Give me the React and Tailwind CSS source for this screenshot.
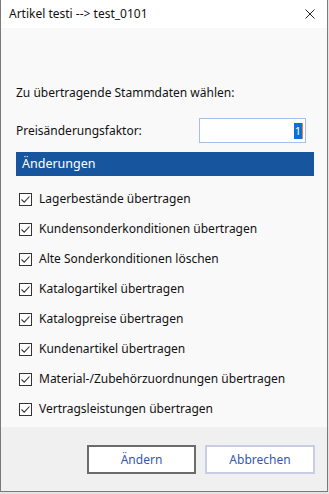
import React from "react"

const items = [
  "Lagerbestände übertragen",
  "Kundensonderkonditionen übertragen",
  "Alte Sonderkonditionen löschen",
  "Katalogartikel übertragen",
  "Katalogpreise übertragen",
  "Kundenartikel übertragen",
  "Material-/Zubehörzuordnungen übertragen",
  "Vertragsleistungen übertragen",
]

const Check = ({ label }) => (
  <div className="flex items-center h-[30px]">
    <div className="w-[13px] h-[13px] border border-[#333] bg-white flex items-center justify-center ml-[3px]">
      <svg width="11" height="11" viewBox="0 0 11 11">
        <path d="M1.5 5.5 L4.2 8.2 L9.5 2.5" fill="none" stroke="#333" strokeWidth="1.1" />
      </svg>
    </div>
    <span className="ml-[7px] text-[12px] text-[#111]">{label}</span>
  </div>
)

export default function App() {
  return (
    <div className="w-[329px] h-[494px] bg-[#e4e4e4] flex" style={{ fontFamily: '"Noto Sans", sans-serif' }}>
      <div className="w-[328px] h-[492px] border border-t-0 border-[#7a7a7a] flex flex-col bg-[#f9f9f9]">
        {/* Title bar */}
        <div className="h-[28px] bg-white flex items-center justify-between pl-[8px] pr-[12px]">
          <span className="text-[12px] text-[#111]">Artikel testi --&gt; test_0101</span>
          <svg width="10" height="10" viewBox="0 0 10 10">
            <path d="M0.5 0.5 L9.5 9.5 M9.5 0.5 L0.5 9.5" stroke="#222" strokeWidth="1" />
          </svg>
        </div>

        {/* Body */}
        <div className="flex-1 flex flex-col pl-[15px] pr-[13px]">
          <div className="mt-[55px] h-[20px] flex items-center text-[12px] text-[#111]">
            Zu übertragende Stammdaten wählen:
          </div>
          <div className="mt-[15px] flex items-center justify-between">
            <span className="text-[12px] text-[#111]">Preisänderungsfaktor:</span>
            <div className="w-[107px] h-[25px] border border-[#a6c1e8] bg-white flex items-center justify-end pr-[2px] mr-[8px]">
              <span className="bg-[#0a6fd6] text-white text-[11px] leading-[16px] px-[1px]">1</span>
              <span className="w-[1px] h-[16px] bg-[#f08020]" />
            </div>
          </div>
          <div className="mt-[9px] h-[24px] bg-[#17569f] flex items-center pl-[6px] text-[12.5px] text-white">
            Änderungen
          </div>
          <div className="mt-[8px] flex flex-col">
            {items.map((t) => (
              <Check key={t} label={t} />
            ))}
          </div>
        </div>

        {/* Footer */}
        <div className="h-[64px] bg-[#f0f0f0] flex items-start justify-end gap-[9px] pt-[18px] pr-[12px]">
          <button className="w-[109px] h-[29px] bg-white border-2 border-[#6b6b6b] text-[12px] text-[#3556b0]">
            Ändern
          </button>
          <button className="w-[110px] h-[29px] bg-white border-2 border-[#c9cde4] text-[12px] text-[#3556b0]">
            Abbrechen
          </button>
        </div>
      </div>
    </div>
  )
}
